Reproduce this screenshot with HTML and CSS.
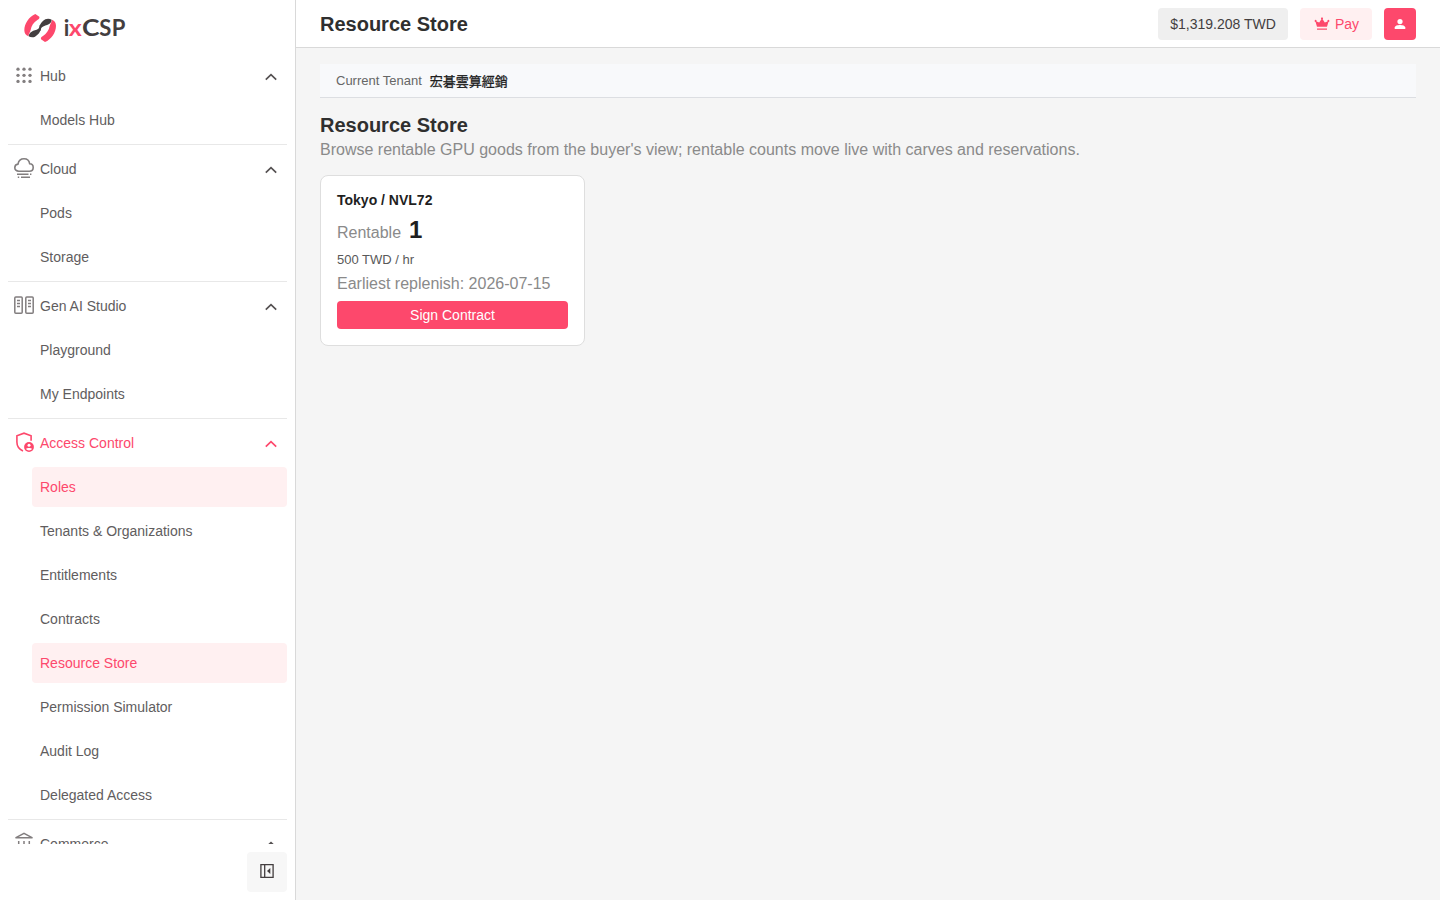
FILE: index.html
```html
<!DOCTYPE html>
<html lang="en">
<head>
<meta charset="utf-8">
<title>Resource Store</title>
<link rel="stylesheet" href="styles.css">
</head>
<body>
<svg width="0" height="0" class="defs">
  <symbol id="chev" viewBox="0 0 12 8"><path d="M.8 6.600 6 1.600l5.200 5" fill="none" stroke="currentColor" stroke-width="1.700"/></symbol>
  <symbol id="half-ring" viewBox="0 0 200 160" overflow="visible">
    <path fill="#fd486c" d="M106 42 118 50C119 54 118 57 112 60 101 67 94 78 92 90c-2 7-6 12-7 19-8-3-12-9-12-18 0-20 14-41 33-49z"/>
    <path fill="#433e3f" d="M86 109c0-6 4-11 9-14 6-4 14-4 19-8 4-3 5-7 5-12 2 2 4 6 4 10-1 11-9 20-18 25-6 3-14 2-19-1z"/>
  </symbol>
</svg>
<div class="app">
  <aside class="sidebar">
    <div class="brand">
      <svg width="110" height="32" viewBox="0 0 110 32">
        <g transform="translate(-20 -12) scale(.3333)">
          <use href="#half-ring" width="200" height="160"/>
          <use href="#half-ring" width="200" height="160" transform="rotate(180 120.500 84)"/>
        </g>
        <text class="brand-text"><tspan x="43.800" y="24">i</tspan><tspan class="brand-x" x="48.700" y="24" textLength="13" lengthAdjust="spacingAndGlyphs">x</tspan><tspan x="62" y="24" textLength="17.500" lengthAdjust="spacingAndGlyphs">C</tspan><tspan x="79.300" y="24">S</tspan><tspan x="91.800" y="24">P</tspan></text>
      </svg>
    </div>
    <nav class="nav">
      <section class="group">
        <div class="head"><svg class="ico" viewBox="0 0 20 20" fill="currentColor"><circle cx="4" cy="3.200" r="1.650"/><circle cx="10" cy="3.200" r="1.650"/><circle cx="16" cy="3.200" r="1.650"/><circle cx="4" cy="9.300" r="1.650"/><circle cx="10" cy="9.300" r="1.650"/><circle cx="16" cy="9.300" r="1.650"/><circle cx="4" cy="15.400" r="1.650"/><circle cx="10" cy="15.400" r="1.650"/><circle cx="16" cy="15.400" r="1.650"/></svg><span>Hub</span><svg class="chev"><use href="#chev"/></svg></div>
        <a class="item">Models Hub</a>
      </section>
      <section class="group">
        <div class="head"><svg class="ico" viewBox="0 0 20 20" fill="none" stroke="currentColor" stroke-width="1.600"><path d="M4.800 12.200C2.200 12.200.8 10.700.8 8.700c0-2 1.400-3.400 3.200-3.600C4.500 2.200 6.800-.2 10-.2c3.100 0 5.300 2.200 5.700 5 2.100.1 3.500 1.600 3.500 3.700 0 2.100-1.600 3.700-3.900 3.700zM3 15.200h11.500M16 15.200h1.400M3.800 18.200h1.400M7 18.200h9"/></svg><span>Cloud</span><svg class="chev"><use href="#chev"/></svg></div>
        <a class="item">Pods</a>
        <a class="item">Storage</a>
      </section>
      <section class="group">
        <div class="head"><svg class="ico" viewBox="0 0 20 20" fill="none" stroke="currentColor" stroke-width="1.500"><rect x=".8" y="1" width="7.400" height="16.300" rx="1"/><rect x="11.800" y="1" width="7.400" height="16.300" rx="1"/><path d="M3 4.500h3M3 7.500h3M3 10.500h3M14 4.500h3M14 7.500h3M14 10.500h3"/></svg><span>Gen AI Studio</span><svg class="chev"><use href="#chev"/></svg></div>
        <a class="item">Playground</a>
        <a class="item">My Endpoints</a>
      </section>
      <section class="group">
        <div class="head active"><svg class="ico" viewBox="0 0 20 20"><path fill="none" stroke="currentColor" stroke-width="1.600" d="M9 18C5 16.200 2.900 12.800 2.900 9V2.800L10 .2l7.100 2.600v4.900"/><circle cx="15" cy="14" r="4.900" fill="currentColor"/><circle cx="15" cy="12.300" r="1.500" fill="#fff"/><path fill="#fff" d="M12 16c.8-1.400 5.200-1.400 6 0-1.300 1.900-4.700 1.900-6 0z"/></svg><span>Access Control</span><svg class="chev"><use href="#chev"/></svg></div>
        <a class="item active">Roles</a>
        <a class="item">Tenants &amp; Organizations</a>
        <a class="item">Entitlements</a>
        <a class="item">Contracts</a>
        <a class="item active">Resource Store</a>
        <a class="item">Permission Simulator</a>
        <a class="item">Audit Log</a>
        <a class="item">Delegated Access</a>
      </section>
      <section class="group">
        <div class="head"><svg class="ico" viewBox="0 0 20 20" fill="none" stroke="currentColor" stroke-width="1.500"><path d="M1.500 3.800 10-.6l8.500 4.400zM4.700 7v7M10 7v7M15.300 7v7M1 17h18"/></svg><span>Commerce</span><svg class="chev"><use href="#chev"/></svg></div>
      </section>
    </nav>
    <div class="foot">
      <button class="collapse" aria-label="Collapse menu"><svg width="14" height="16" viewBox="0 0 14 16"><path fill="none" stroke="#433e3f" stroke-width="1.300" d="M.9 1.600h12.200v12.800H.9zM4.700 1.600v12.800"/><path fill="#433e3f" d="M10.300 5v6L7 8z"/></svg></button>
    </div>
  </aside>
  <div class="main">
    <header class="topbar">
      <h1 class="title">Resource Store</h1>
      <div class="balance">$1,319.208 TWD</div>
      <button class="pay"><svg width="14" height="14" viewBox="0 0 14 14" fill="currentColor"><path d="M2 9.800.6 4.900a1 1 0 1 1 .9-.5L4.200 5.600 6.400 2.200a1 1 0 1 1 1.200 0l2.200 3.400 2.700-1.200a1 1 0 1 1 .9.500L12 9.800zM2 11.500h10v1.300H2z"/></svg>Pay</button>
      <button class="user" aria-label="Account"><svg width="12" height="12" viewBox="0 0 12 12" fill="#fff"><circle cx="6" cy="3.600" r="2.600"/><path d="M.7 11V9.600C.7 7.800 3.800 7 6 7s5.300.8 5.300 2.600V11z"/></svg></button>
    </header>
    <main class="content">
      <div class="tenant"><span>Current Tenant</span><strong>宏碁雲算經銷</strong></div>
      <h2 class="title page-title">Resource Store</h2>
      <p class="lead">Browse rentable GPU goods from the buyer's view; rentable counts move live with carves and reservations.</p>
      <article class="card">
        <h3 class="card-name">Tokyo / NVL72</h3>
        <div class="rentable"><span>Rentable</span><b>1</b></div>
        <div class="price">500 TWD / hr</div>
        <div class="replenish">Earliest replenish: 2026-07-15</div>
        <button class="sign">Sign Contract</button>
      </article>
    </main>
  </div>
</div>
</body>
</html>
```
FILE: styles.css
```css
* { box-sizing: border-box; }
body { margin: 0; font: 14px/20px "Liberation Sans", "Noto Sans CJK JP", sans-serif; color: #433e3f; }
h1, h2, h3, p { margin: 0; }
button { border: 0; padding: 0; font: inherit; }
.defs { display: block; }
.app { display: flex; height: 900px; overflow: hidden; }
.sidebar { width: 296px; flex: none; display: flex; flex-direction: column; border-right: 1px solid #d9d9d9; background: #fff; }
.brand { height: 56px; flex: none; padding: 12px 20px; }
.brand svg { display: block; }
.brand-text { font: bold 22px Lato, sans-serif; fill: #433e3f; }
.brand-x { fill: #fd486c; }
.nav { height: 788px; overflow: hidden; padding: 0 8px; }
.group { display: flex; flex-direction: column; gap: 4px; padding-bottom: 4px; }
.group + .group { border-top: 1px solid #e8e8e8; padding-top: 4px; }
.head { height: 40px; display: flex; align-items: center; padding: 0 10px 0 6px; color: #615d5e; }
.ico { width: 20px; height: 20px; margin-right: 6px; color: #827e7f; overflow: visible; }
.chev { width: 12px; height: 8px; margin-left: auto; margin-top: 2px; color: #555152; }
.item { height: 40px; flex: none; margin-left: 24px; padding: 10px 8px; border-radius: 4px; color: #615d5e; }
.active, .active .ico, .active .chev { color: #fd486c; }
.item.active { background: #fff0f1; }
.foot { height: 56px; padding: 8px; display: flex; justify-content: flex-end; }
.collapse { width: 40px; height: 40px; border-radius: 4px; background: #f7f7f7; display: flex; align-items: center; justify-content: center; padding-bottom: 2px; }
.main { flex: 1; background: #f5f5f5; }
.topbar { height: 48px; background: #fff; border-bottom: 1px solid #d9d9d9; padding: 0 24px; display: flex; align-items: center; gap: 12px; }
.title { font-size: 20px; line-height: 28px; font-weight: bold; color: #2f2f2f; }
.topbar .title { flex: 1; }
.balance, .pay, .user { height: 32px; border-radius: 4px; display: flex; align-items: center; justify-content: center; }
.balance { width: 130px; background: #efefef; }
.pay { width: 72px; padding-left: 2px; gap: 6px; background: #fff0f1; color: #fd486c; }
.pay svg { overflow: visible; }
.user { width: 32px; background: #fd486c; }
.content { padding: 16px 24px; }
.tenant { height: 34px; display: flex; align-items: center; gap: 8px; padding: 0 16px; background: #f8f9fb; border-bottom: 1px solid #dcdee2; font-size: 13px; color: #666; }
.tenant strong { padding-top: 2px; color: #1f1f1f; font-weight: 400; -webkit-text-stroke: .3px #1f1f1f; }
.page-title { margin-top: 13px; }
.lead { font-size: 16px; line-height: 22px; color: #8a8a8a; }
.card { width: 265px; height: 171px; margin-top: 14px; padding: 14px 16px 16px; background: #fff; border: 1px solid #dedede; border-radius: 8px; }
.card-name { font-size: 14px; line-height: 20px; color: #1f1f1f; }
.rentable { display: flex; align-items: baseline; gap: 8px; margin-top: 4px; font-size: 16px; line-height: 32px; color: #8a8a8a; }
.rentable b { font-size: 24px; color: #1f1f1f; }
.price { margin-top: 1px; font-size: 13px; line-height: 20px; color: #595959; }
.replenish { margin-top: 3px; font-size: 16px; line-height: 22px; color: #8a8a8a; }
.sign { display: block; width: 100%; height: 28px; margin-top: 6px; border-radius: 4px; background: #fd486c; color: #fff; }
```
